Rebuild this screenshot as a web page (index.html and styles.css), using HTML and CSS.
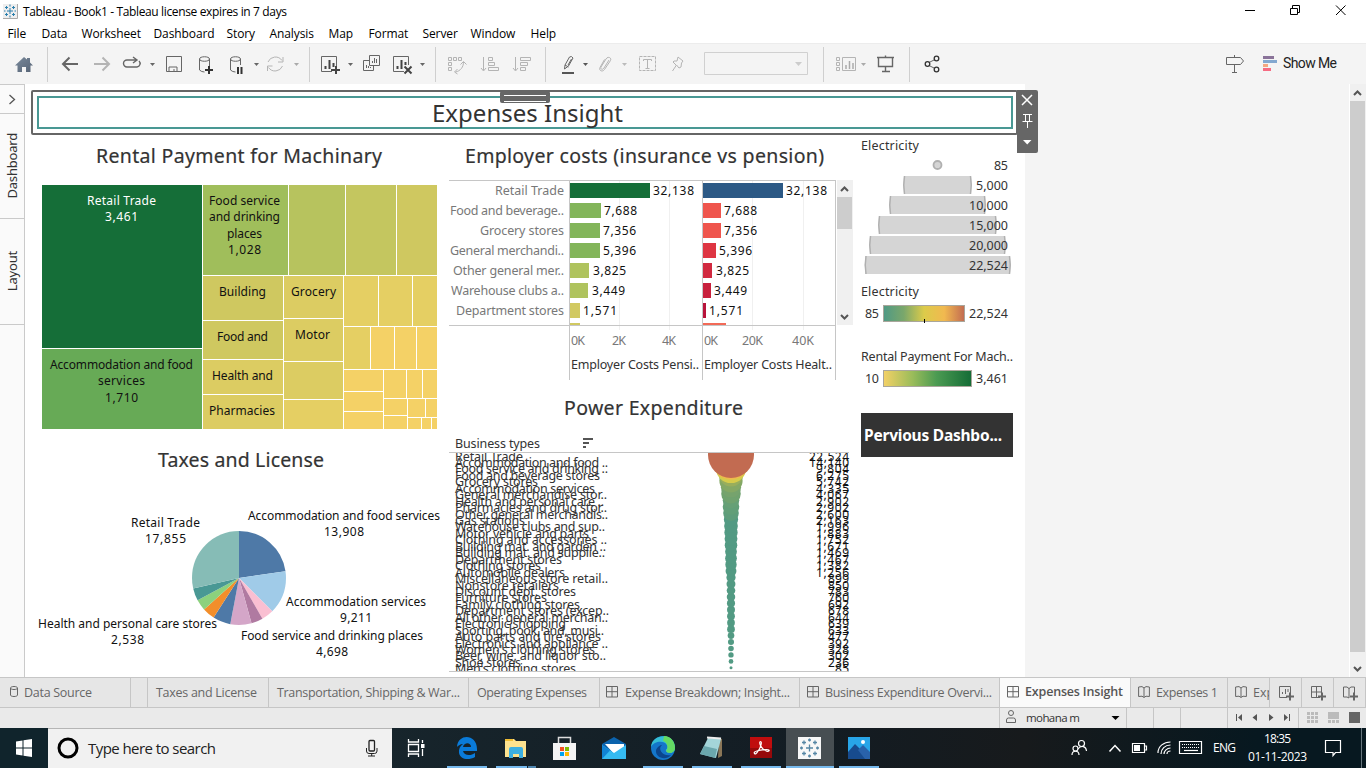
FILE: index.html
```html
<!DOCTYPE html>
<html lang="en">
<head>
<meta charset="utf-8">
<title>Tableau - Book1</title>
<link rel="stylesheet" href="styles.css">
</head>
<body>
<svg width="0" height="0" class="defs">
  <defs>
    <symbol id="dash" viewBox="0 0 12 12"><path d="M.5.5h11v10.5h-11zM6 .5V11M.5 5.7h11" fill="none" stroke="#666"/></symbol>
    <symbol id="book" viewBox="0 0 12 12"><path d="M.6 1 4 .6l2 1.4 2-1.4 3.400.4v9.500L8 10.200 6 11.500 4 10.200.6 10.500zM6 2v9" fill="none" stroke="#666"/></symbol>
    <symbol id="caret" viewBox="0 0 5 3"><path d="M0 0h5L2.500 3z"/></symbol>
  </defs>
</svg>
<div class="app">
  <header class="titlebar">
    <svg width="1366" height="22" viewBox="0 0 1366 22">
      <rect x="3" y="4" width="14" height="14" fill="#eee"/><path d="M17.500 4v14.500H3" fill="none" stroke="#aaa"/>
      <path d="M10 8v6M7 11h6M10 4.500v2M10 15.500v2M4 11h1.500M14.500 11h1.500M6.500 6v3M5 7.500h3M13.500 6v3M12 7.500h3M6.500 13v3M5 14.500h3M13.500 13v3M12 14.500h3" stroke="#2a7fad"/>
      <text class="ui" x="23" y="16" textLength="264">Tableau - Book1 - Tableau license expires in 7 days</text>
      <path d="M1245 10.500h10M1290.500 8.500h7v6h-7zM1292.500 8.500v-3h7v7h-2M1336 5.500l9.500 9.500M1345.500 5.500l-9.500 9.500" fill="none" stroke="#000"/>
    </svg>
  </header>
  <nav class="menubar">
    <span>File</span><span>Data</span><span>Worksheet</span><span>Dashboard</span><span>Story</span><span>Analysis</span><span>Map</span><span>Format</span><span>Server</span><span>Window</span><span>Help</span>
  </nav>
  <div class="toolbar">
    <svg class="group" width="48" height="41" viewBox="0 43 48 41">
      <linearGradient id="home" x2="1" y2="1"><stop stop-color="#7a8a9c"/><stop offset="1" stop-color="#566375"/></linearGradient>
      <path d="M15 65.500l9-8.500 3 2.500V58h3v4.500l3 3h-2.500v6.500h-4.500v-5h-4v5h-4.500v-6.500z" fill="url(#home)"/><path class="sep" d="M47.500 47v35"/>
    </svg>
    <svg class="group" width="262" height="41" viewBox="48 43 262 41">
      <path d="M78 64H63M69.500 57.500L63 64l6.500 6.500" class="dk w2"/><path d="M94 64h15M102.500 57.500L109 64l-6.500 6.500" class="lt w2"/>
      <path d="M136 60h-9a3.500 3.500 0 0 0 0 7h10a3.500 3.500 0 0 0 2-6M133 57l4 3-4 3" class="dk" stroke-width="1.400"/>
      <use href="#caret" x="150" y="63" width="5" height="3" fill="#666"/>
      <path d="M166.500 56.500h15v15h-15zM169 71v-4h8v4M174 69v2" class="dk"/>
      <path d="M199.500 59v11q2 2 5 2M209.500 59v7M199.500 59c0-3 10-3 10 0s-10 3-10 0" class="dk"/><path d="M205 70h8M209 66v8" stroke="#333" stroke-width="2"/>
      <path d="M230.500 59v11q2 2 5 2M240.500 59v6M230.500 59c0-3 10-3 10 0s-10 3-10 0" class="dk"/><path d="M237 67v7h2v-7zM240.500 67v7h2v-7z" fill="#333"/>
      <use href="#caret" x="254" y="63" width="5" height="3" fill="#666"/>
      <path d="M268 62a8 8 0 0 1 14-1.500M283 57v5h-5M282.500 66a8 8 0 0 1-14 1.500M267.500 71v-5h5" class="lt"/>
      <use href="#caret" x="294" y="63" width="5" height="3" fill="#aaa"/><path class="sep" d="M309.500 47v35"/>
    </svg>
    <svg class="group" width="126" height="41" viewBox="310 43 126 41">
      <path d="M332 71.500h-10.500v-15h15V66" class="dk"/><path d="M325.500 69v-3M329.500 69v-9M333.500 67v-4M331 70h9M336 66v8" stroke="#444" stroke-width="2" fill="none"/>
      <use href="#caret" x="348" y="63" width="5" height="3" fill="#666"/>
      <path d="M369.500 55.500h10v10h-10zM369 60.500h-5.500v10h10V66M372.500 63v-2M374.500 63v-5M376.500 63v-4M366.500 68v-3M368.500 68v-2M370.500 68v-1" class="dk"/>
      <path d="M404 71.500h-10.500v-15h15V65" class="dk"/><path d="M397.500 69v-3M401.500 69v-9M405.500 65v-3M404.500 66.500l7 7M411.500 66.500l-7 7" stroke="#444" stroke-width="2"/>
      <use href="#caret" x="420" y="63" width="5" height="3" fill="#666"/><path class="sep" d="M435.500 47v35"/>
    </svg>
    <svg class="group" width="110" height="41" viewBox="436 43 110 41">
      <path d="M448.500 57.500h3v3h-3zM453.500 57.500h3v3h-3zM458.500 57.500h3v3h-3zM448.500 62.500h3v3h-3zM448.500 67.500h3v3h-3zM463.500 62c0 5-3 9-8 10M460.500 64.500l3-3 3 3M457.500 69l-3 3 3 2" class="lt"/>
      <path d="M483.500 57v13M481 68l2.500 3 2.500-3M488.500 57.500h4v3h-4zM488.500 62.500h6v3h-6zM488.500 67.500h10v3h-10z" class="lt"/>
      <path d="M515.500 57v13M513 68l2.500 3 2.500-3M520.500 57.500h10v3h-10zM520.500 62.500h7v3h-7zM520.500 67.500h5v3h-5z" class="lt"/><path class="sep" d="M545.500 47v35"/>
    </svg>
    <svg class="group" width="278" height="41" viewBox="546 43 278 41">
      <path d="M564.500 69l.5-4 4.500-8q2-1.500 3.500 1l-4.500 8zM565 65l3.500 2M571.500 59l-3.500 6" class="dk"/><path d="M562 73h12" stroke="#555" stroke-width="2"/>
      <use href="#caret" x="583" y="63" width="5" height="3" fill="#555"/>
      <path d="M609 60l-5 8c-1.500 2.500-4 1-3-1l5-8c1.500-3 6-1.500 4.500 1.500l-6 9c-2 3-6 1-4.500-2l4.500-8" class="lt"/>
      <use href="#caret" x="622" y="63" width="5" height="3" fill="#bbb"/>
      <path d="M639.500 56.500h16v14h-16z" class="lt" stroke-dasharray="3 1"/><path d="M643.500 61v-1.500h8V61M647.500 59.500v9M645.500 68.500h4" class="lt"/>
      <path d="M678 57l5 4-1.500 2-.5 4-2 1-2.500-3-4 6M676 65l-3-3 1-1h3l1-4" class="lt"/>
      <path d="M704.500 52.500h103v22h-103z" fill="none" stroke="#d0d0d0"/><path d="M795 62h7l-3.500 4z" fill="#ccc"/><path class="sep" d="M823.500 47v35"/>
    </svg>
    <svg class="group" width="86" height="41" viewBox="824 43 86 41">
      <path d="M836.500 57.500h3v3h-3zM836.500 62.500h3v3h-3zM836.500 67.500h3v3h-3zM842.500 57.500h13v13h-13z" class="lt"/><path d="M846 69v-4M849.500 69v-8M853 69v-6" stroke="#aaa" stroke-width="1.500"/>
      <use href="#caret" x="861" y="63" width="5" height="3" fill="#aaa"/>
      <path d="M878.500 57.500h14v9h-14zM877 57.500h17M885.500 67v5M882 71.500h8M885.500 55.500v2" class="dk" stroke-width="1.400"/><path class="sep" d="M909.500 47v35"/>
    </svg>
    <svg class="group" width="296" height="41" viewBox="910 43 296 41">
      <path d="M928 63l8-4M928 65l8 4" class="dk"/><g fill="#f4f4f4" stroke="#333" stroke-width="1.300"><circle cx="927.500" cy="64" r="2.300"/><circle cx="936.500" cy="58.500" r="2.300"/><circle cx="936.500" cy="69.500" r="2.300"/></g>
    </svg>
    <svg class="group" width="160" height="41" viewBox="1206 43 160 41">
      <path d="M1226.500 57.500h14l3 3.500-3 3.500h-14zM1234.500 55v2M1234.500 65v7M1232 72.500h5" class="dk"/>
      <path d="M1263 56h11v3h-11z" fill="#8a7399"/><path d="M1263 60h14v3h-14z" fill="#83a8d0"/><path d="M1263 64h5v3h-5z" fill="#f3a781"/><path d="M1263 68h8v3h-8z" fill="#f66b82"/>
      <text class="show" x="1283" y="68" textLength="54">Show Me</text>
    </svg>
  </div>
  <main class="work">
    <aside class="rail">
      <div class="rail-toggle"><svg width="8" height="11" viewBox="0 0 8 11"><path d="M1.500 1l5 4.500-5 4.500" fill="none" stroke="#555" stroke-width="1.300"/></svg></div>
      <div class="rail-tab"><span>Dashboard</span></div>
      <div class="rail-tab"><span>Layout</span></div>
    </aside>
    <section class="canvas">
      <div class="zone">
        <div class="zone-title"><svg width="200" height="29" viewBox="428 98 200 29"><text x="432" y="122" class="t24" textLength="191">Expenses Insight</text></svg></div>
        <div class="handle"></div>
        <div class="zone-tools"><svg width="21" height="63" viewBox="1017 90 21 63"><path d="M1022 95l10 10M1032 95l-10 10" stroke="#fff" stroke-width="1.500"/><path d="M1023 114.500h9M1025.500 115v6M1029.500 115v6M1022.500 121.500h10M1027.500 122v6" fill="none" stroke="#fff"/><path d="M1023 140h8.500l-4.300 4.500z" fill="#fff"/></svg></div>
      </div>
      <div class="panels">
        <div class="col">
          <svg id="treemap" width="420" height="303" viewBox="25 135 420 303"><text class="t20" x="96" y="163" textLength="286">Rental Payment for Machinary</text></svg>
          <svg width="420" height="239" viewBox="25 438 420 239">
            <text class="t20" x="158" y="467" textLength="166">Taxes and License</text>
            <g id="pie" fill="none" stroke-width="47" transform="rotate(-90 239 578)"></g>
            <g class="mark">
              <text x="131" y="527" textLength="69">Retail Trade</text><text x="145" y="543" textLength="41">17,855</text>
              <text x="248" y="520" textLength="192">Accommodation and food services</text><text x="324" y="536" textLength="40">13,908</text>
              <text x="286" y="606" textLength="140">Accommodation services</text><text x="340" y="622" textLength="32">9,211</text>
              <text x="38" y="628" textLength="179">Health and personal care stores</text><text x="111" y="644" textLength="33">2,538</text>
              <text x="241" y="640" textLength="182">Food service and drinking places</text><text x="316" y="656" textLength="32">4,698</text>
            </g>
          </svg>
        </div>
        <div class="col">
          <svg id="bars" width="411" height="257" viewBox="445 135 411 257">
            <text class="t20" x="465" y="163" textLength="359">Employer costs (insurance vs pension)</text>
            <path d="M619.500 181v149M669.500 181v149M752.500 181v149M803.500 181v149" stroke="#f0f0f0"/>
            <g id="bar-rows"></g>
            <path d="M449 180.500h387M449 325.500h387M569.500 180v200M702.500 180v200M835.500 180v200" stroke="#c6c6c6"/>
            <g class="axis"><text x="571" y="345" textLength="14">0K</text><text x="612" y="345" textLength="14">2K</text><text x="662" y="345" textLength="14">4K</text><text x="704" y="345" textLength="14">0K</text><text x="742" y="345" textLength="21">20K</text><text x="792" y="345" textLength="22">40K</text></g>
            <g class="lab"><text x="571" y="369" textLength="128">Employer Costs Pensi..</text><text x="704" y="369" textLength="128">Employer Costs Healt..</text></g>
            <rect x="837" y="180" width="16" height="145" fill="#f0f0f0"/><rect x="837" y="197" width="15" height="32" fill="#cdcdcd"/>
            <path d="M841 191l3.500-3.500 3.500 3.500M841 315l3.500 3.500 3.500-3.500" fill="none" stroke="#555" stroke-width="2"/>
          </svg>
          <svg width="411" height="285" viewBox="445 392 411 285">
            <clipPath id="pane"><rect x="445" y="453" width="411" height="218"/></clipPath>
            <text class="t20" x="564" y="415" textLength="179">Power Expenditure</text>
            <text class="lab" x="455" y="448" textLength="85">Business types</text>
            <path d="M583 438h10v2h-10zM583 442h6v2h-6zM583 446h3v2h-3z" fill="#555"/>
            <path d="M449 452.500h400M449 671.500h400" stroke="#c6c6c6"/>
            <g id="power" clip-path="url(#pane)"></g>
          </svg>
        </div>
        <div class="col">
          <svg width="169" height="278" viewBox="856 135 169 278">
            <defs>
              <linearGradient id="g1"><stop stop-color="#4f9985"/><stop offset=".25" stop-color="#7aa76b"/><stop offset=".5" stop-color="#dccb4a"/><stop offset=".75" stop-color="#f1b950"/><stop offset="1" stop-color="#c26b51"/></linearGradient>
              <linearGradient id="g2"><stop stop-color="#f4d166"/><stop offset=".33" stop-color="#9abc5a"/><stop offset=".6" stop-color="#4c9b52"/><stop offset="1" stop-color="#146c36"/></linearGradient>
            </defs>
            <g id="sizes"></g>
            <circle cx="937.500" cy="165" r="4" fill="#d5d5d5" stroke="#b0b0b0" stroke-width="1.800"/>
            <g class="lab">
              <text x="861" y="150" textLength="58">Electricity</text><text x="994" y="170" textLength="14">85</text>
              <text x="976" y="190" textLength="32">5,000</text><text x="969" y="210" textLength="39">10,000</text><text x="969" y="230" textLength="39">15,000</text><text x="969" y="250" textLength="39">20,000</text><text x="969" y="270" textLength="39">22,524</text>
              <text x="861" y="296" textLength="58">Electricity</text><text x="865" y="318" textLength="14">85</text><text x="969" y="318" textLength="39">22,524</text>
              <text x="861" y="361" textLength="152">Rental Payment For Mach..</text><text x="865" y="383" textLength="14">10</text><text x="976" y="383" textLength="32">3,461</text>
            </g>
            <rect x="883.500" y="305.500" width="81" height="16" fill="url(#g1)" stroke="#a9a69b"/><path d="M924.500 319v4" stroke="#000"/>
            <rect x="883.500" y="370.500" width="88" height="16" fill="url(#g2)" stroke="#a9a69b"/>
          </svg>
          <button class="nav-btn"><svg width="152" height="44" viewBox="861 413 152 44"><text x="864" y="441" textLength="138">Pervious Dashbo...</text></svg></button>
        </div>
      </div>
    </section>
    <div class="void"></div>
    <div class="vscroll"><svg width="16" height="17" viewBox="0 0 16 17"><path d="M4 11l3.500-3.500L11 11" fill="none" stroke="#555" stroke-width="2"/></svg><div class="thumb"></div><svg width="16" height="25" viewBox="0 -8 16 25"><path d="M4 7l3.500 3.500L11 7" fill="none" stroke="#555" stroke-width="2"/></svg></div>
  </main>
  <div class="tabs">
    <div class="tab"><svg width="130" height="29" viewBox="0 678 130 29"><path d="M10.500 688c0-2 7-2 7 0v7c0 2-7 2-7 0zM10.500 688c0 2 7 2 7 0" fill="none" stroke="#666"/><text x="24" y="697" textLength="68">Data Source</text></svg></div>
    <div class="tab"></div>
    <div class="tab"><svg width="120" height="29" viewBox="148 678 120 29"><text x="156" y="697" textLength="101">Taxes and License</text></svg></div>
    <div class="tab"><svg width="199" height="29" viewBox="269 678 199 29"><text x="277" y="697" textLength="183">Transportation, Shipping &amp; War...</text></svg></div>
    <div class="tab"><svg width="130" height="29" viewBox="469 678 130 29"><text x="477" y="697" textLength="110">Operating Expenses</text></svg></div>
    <div class="tab"><svg width="199" height="29" viewBox="600 678 199 29"><use href="#dash" x="606" y="686" width="12" height="12"/><text x="625" y="697" textLength="165">Expense Breakdown; Insight...</text></svg></div>
    <div class="tab"><svg width="199" height="29" viewBox="800 678 199 29"><use href="#dash" x="807" y="686" width="12" height="12"/><text x="825" y="697" textLength="167">Business Expenditure Overvi...</text></svg></div>
    <div class="tab active"><svg width="130" height="29" viewBox="1000 678 130 29"><use href="#dash" x="1007" y="686" width="12" height="12"/><text x="1025" y="696" textLength="98">Expenses Insight</text></svg></div>
    <div class="tab"><svg width="96" height="29" viewBox="1131 678 96 29"><use href="#book" x="1138" y="686" width="12" height="12"/><text x="1156" y="697" textLength="62">Expenses 1</text></svg></div>
    <div class="tab"><svg width="41" height="29" viewBox="1228 678 41 29"><use href="#book" x="1235" y="686" width="12" height="12"/><text x="1253" y="697">Exp</text></svg></div>
    <div class="tab"><svg width="31" height="29" viewBox="1270 678 31 29"><path d="M1287 697.500h-7.500v-11h11v7M1282.500 694v-2M1285.500 694v-5M1288 692v-3" fill="none" stroke="#666"/><path d="M1286 696.500h8M1290 692.500v8" stroke="#666" stroke-width="2"/></svg></div>
    <div class="tab"><svg width="31" height="29" viewBox="1302 678 31 29"><path d="M1320 697.500h-8.500v-11h10v7M1316.500 687v10M1312 692h9" fill="none" stroke="#666"/><path d="M1318 696.500h8M1322 692.500v8" stroke="#666" stroke-width="2"/></svg></div>
    <div class="tab"><svg width="31" height="29" viewBox="1334 678 31 29"><path d="M1349 698l-2-1h-3.500v-10h3.500l2 1.500 2-1.500h3.500v6M1349 688v10" fill="none" stroke="#666"/><path d="M1350 696.500h8M1354 692.500v8" stroke="#666" stroke-width="2"/></svg></div>
  </div>
  <div class="status">
    <div></div>
    <div><svg width="126" height="20" viewBox="1000 708 126 20"><circle cx="1011" cy="713" r="2.500" fill="none" stroke="#666"/><path d="M1006.500 722.500v-2.500q0-2 2-2h5q2 0 2 2v2.500z" fill="none" stroke="#666"/><text x="1026" y="722" textLength="54">mohana m</text><path d="M1111.500 716h8l-4 4z"/></svg></div>
    <div></div><div></div><div></div>
    <div><svg width="70" height="20" viewBox="1228 708 70 20"><path d="M1236 714v7h1v-7zM1242 714v7l-4-3.500zM1257 714v7l-4.500-3.500zM1269 714v7l4.500-3.500zM1284 714v7l4-3.500zM1289 714v7h1v-7z" fill="#555"/></svg></div>
    <div><svg width="67" height="20" viewBox="1299 708 67 20"><path d="M1307 712h3v3h-3zM1311 712h3v3h-3zM1315 712h3v3h-3zM1307 716h3v3h-3zM1311 716h3v3h-3zM1315 716h3v3h-3zM1307 720h3v3h-3zM1311 720h3v3h-3zM1315 720h3v3h-3zM1328 712h11v7h-11zM1328 720h3v3h-3zM1332 720h3v3h-3zM1336 720h3v3h-3z" fill="#bbb"/><path d="M1349 712h11v11h-11z" fill="#666"/></svg></div>
  </div>
  <footer class="taskbar">
    <div class="start"><svg width="48" height="40" viewBox="0 728 48 40"><path d="M16 741.500l6.500-1v7H16zM23.500 740.300l8.500-1.300v8.500h-8.500zM16 748.500h6.500v7l-6.500-1zM23.500 748.500H32v8.500l-8.500-1.300z" fill="#fff"/></svg></div>
    <div class="search"><svg width="344" height="39" viewBox="48 729 344 39"><circle cx="68" cy="748" r="9" fill="none" stroke="#000" stroke-width="3"/><text x="88" y="754" textLength="128">Type here to search</text><rect x="369" y="740.500" width="5.500" height="10.500" rx="1" fill="none" stroke="#222" stroke-width="1.300"/><path d="M366.500 748v3q0 2.500 2.500 2.500h5.500q2.500 0 2.500-2.500v-3M371.700 753v3M368 756h7" fill="none" stroke="#222"/></svg></div>
    <svg class="apps" width="648" height="40" viewBox="392 728 648 40">
      <rect x="786" y="728" width="48" height="40" fill="#474e52"/>
      <g fill="none" stroke="#fff" stroke-width="1.300"><path d="M408.500 744.500h10v7h-10zM408.500 739v3h10v-3M408.500 757v-3h10v3M422.500 740v3M422.500 749v7"/></g><rect x="421" y="744" width="3.500" height="4" fill="#fff"/>
      <path d="M457 747c1-14 20-13 20 2v2h-14c1 5 8 5 12 2v4c-7 4-15 2-16-4-.5-4 1-7 4-9-3 0-5 2-6 3zm6 0h8c0-5-7-5-8 0z" fill="#0a7bd9"/>
      <path d="M505 739h9l2 2h10v16h-21z" fill="#fde28e"/><path d="M505 739h8v2h-8z" fill="#f0bd34"/><path d="M509 758v-9q0-2 2-2h10q2 0 2 2v9h-4v-4h-6v4z" fill="#3cafe1"/>
      <path d="M558.500 744v-6.500h12v6.500" fill="none" stroke="#ddd" stroke-width="1.500"/><path d="M553 743h23v17h-23z" fill="#f4f4f4"/><path d="M560 747h4v4h-4z" fill="#f25022"/><path d="M565 747h4v4h-4z" fill="#7fba00"/><path d="M560 752h4v4h-4z" fill="#00a4ef"/><path d="M565 752h4v4h-4z" fill="#ffb900"/>
      <path d="M602 744l12-7 12 7v15h-24z" fill="#0c63ad"/><path d="M605 744h19v9l-9 2z" fill="#fff"/><path d="M602 745l12 8 12-8v14h-24z" fill="#35baf1"/><path d="M602 745l8 5.500-8 8.500z" fill="#1183d4"/>
      <circle cx="663" cy="748" r="12" fill="#1476c9"/><path d="M651 747c1-14 24-15 24 1 0 6-8 6-9 3-1-2 3-2 1-6-3-5-13-4-16 2z" fill="#35bed4"/><path d="M664 736c8 0 11 7 11 12 0 6-8 6-9 3 3-3 1-9-3-10z" fill="#64da63"/><path d="M662 745c-5 4 1 12 9 10-5 6-16 3-15-5 1-3 4-5 6-5z" fill="#0b458c"/>
      <path d="M719 738l3 1 0 17-4 2z" fill="#8a7657"/><path d="M708 738l13 1-5 19-16-4z" fill="#a4d5d9"/><path d="M704 746l13 3-2 9-15-4z" fill="#6ba7ad"/><path d="M707 737.500l14 1" stroke="#eee" stroke-width="2"/>
      <rect x="750" y="737" width="22" height="21" fill="#c00d0e"/><path d="M750 748h22v10h-22z" fill="#96090b"/><path d="M754.500 753.500c-2-2 6-4 12-4 5 0 2 3-1 1-5-2-7-9-5-9s0 6-2 9-3 4-4 3z" fill="none" stroke="#fff" stroke-width="1.200"/>
      <rect x="798" y="737" width="23" height="22" fill="#f7f7f7"/><path d="M809.500 744.500v7M806 748h7M809.500 738.500v3M808 740h3M809.500 754.500v3M808 756h3M800 748h3M801.500 746.500v3M816 748h3M817.500 746.500v3M804 740.500v4M802 742.500h4M815 740.500v4M813 742.500h4M804 751.500v4M802 753.500h4M815 751.500v4M813 753.500h4" stroke="#5586a4" stroke-width="1.300"/>
      <rect x="848" y="737" width="22" height="22" fill="#28a5e8"/><path d="M848 752l7-8 15 15h-22z" fill="#174b8e"/><path d="M858 750l5-5 7 7v7h-5z" fill="#2962aa"/><circle cx="863" cy="742" r="2" fill="#fff"/>
      <path d="M447 766h40v2h-40zM496 766h31v2h-31zM643 766h40v2h-40zM692 766h40v2h-40zM741 766h40v2h-40zM786 766h48v2h-48zM839 766h40v2h-40z" fill="#76b9ed"/><path d="M528 766h8v2h-8z" fill="#4f86b0"/>
    </svg>
    <svg class="tray" width="326" height="40" viewBox="1040 728 326 40">
      <g fill="none" stroke="#fff" stroke-width="1.200"><circle cx="1081.500" cy="743.500" r="3"/><circle cx="1075.500" cy="748.500" r="2.500"/><path d="M1072 755c0-5 7-5 7 0M1078 749c3-4 8-3 8.500 2"/><path d="M1109.500 751.500l5.500-6 5.500 6" stroke-width="1.500"/><path d="M1132.500 743.500h12v9h-12zM1145 746h1.500v4h-1.500"/><path d="M1158 753c0-7 6-11 12.500-11M1161 754c0-5 4-9 9.500-9M1164 754c0-3 3-6 6.500-6M1167 754c0-2 1-3 3.500-3"/><path d="M1179.500 741.500h22v12h-22z"/><path d="M1182 744.500h18M1182 747.500h18" stroke-dasharray="1 1"/><path d="M1184 750.500h14"/><path d="M1325.500 740.500h15v12h-5l-2.500 3v-3h-7.500z"/></g>
      <rect x="1134" y="745" width="6" height="6" fill="#fff"/>
      <text x="1213" y="752" textLength="23">ENG</text><text x="1264" y="743" textLength="27">18:35</text><text x="1248" y="761" textLength="59">01-11-2023</text><path d="M1361.500 728v40" stroke="#66757c"/>
    </svg>
  </footer>
</div>
<script src="charts.js"></script>
</body>
</html>
```
FILE: styles.css
```css
* { box-sizing: border-box; }
body { margin: 0; font-family: "Noto Sans", "Open Sans", sans-serif; background: #f4f4f4; }
svg { display: block; flex: none; }
.defs { display: none; }
.app { width: 1366px; height: 768px; display: flex; flex-direction: column; overflow: hidden; }
.titlebar { height: 22px; background: #fff; }
.ui { font: 12px "Open Sans", sans-serif; fill: #000; }
.menubar { height: 21px; background: #fff; display: grid; grid-template-columns: 34px 40px 72px 73px 43px 59px 40px 54px 48px 60px 60px; padding-left: 7.500px; font: 12px/24px "Open Sans", sans-serif; letter-spacing: -.1px; color: #000; }
.toolbar { height: 41px; display: flex; background: #f4f4f4; border-top: 1px solid #ececec; }
.group { margin-top: -1px; }
.dk { fill: none; stroke: #666; }
.lt { fill: none; stroke: #b4b4b4; }
.w2 { stroke-width: 2; }
.sep { fill: none; stroke: #cfcfcf; }
.show { font: 14px Roboto, sans-serif; fill: #222; }

.work { height: 593px; display: flex; }
.rail { width: 25px; background: #fafafa; border-right: 1px solid #cacaca; border-top: 1px solid #cacaca; }
.rail-toggle { height: 29px; border-bottom: 1px solid #cacaca; display: flex; align-items: center; justify-content: center; }
.rail-tab { height: 105px; border-bottom: 1px solid #cacaca; display: flex; align-items: center; justify-content: center; }
.rail-tab + .rail-tab { height: 106px; }
.rail-tab span { writing-mode: vertical-rl; transform: rotate(180deg); font-size: 13px; line-height: 20px; letter-spacing: -.2px; color: #333; }
.canvas { width: 1000px; background: #fff; display: flex; flex-direction: column; }
.zone { position: relative; width: 987px; height: 45px; margin: 6px 0 0 6px; border: 2px solid #666; border-radius: 2px; padding: 4px 3px 4px 4px; flex: none; }
.zone-title { height: 33px; border: 2px solid #499894; display: flex; justify-content: center; align-items: center; padding-left: 6px; }
.zone-title svg { overflow: visible; }
.handle { position: absolute; left: 467px; top: -1px; width: 50px; height: 12px; background: #666; border-radius: 2px; border-top: 4px solid #666; }
.handle::before { content: ""; display: block; height: 5px; margin: 0 4px; border-top: 1px solid #fff; border-bottom: 1px solid #fff; }
.zone-tools { position: absolute; left: 984px; top: -2px; width: 21px; height: 63px; background: #666; border-radius: 0 2px 2px 0; z-index: 2; }
.panels { display: grid; grid-template-columns: 420px 411px 169px; height: 542px; }
.col { display: flex; flex-direction: column; }
.t24 { font-size: 24px; fill: #333; }
.t20 { font-size: 19.500px; fill: #333; stroke: #333; stroke-width: .2px; }
.mark { font-size: 12px; fill: #111; }
.lab { font-size: 12.500px; fill: #333; }
.axis, .row-head { font-size: 12.500px; fill: #787878; }
.nav-btn { width: 152px; height: 44px; margin: 0 0 0 5px; padding: 0; border: 0; background: #333; }
.nav-btn text { font: bold 15.500px "Noto Sans", sans-serif; fill: #fff; }
.void { width: 324px; background: #f4f4f4; }
.vscroll { width: 17px; border-left: 1px solid #fff; background: #f0f0f0; display: flex; flex-direction: column; }
.thumb { width: 15px; flex: 1; background: #cdcdcd; }

.tabs { height: 31px; border-top: 1px solid #c6c6c6; border-bottom: 1px solid #c6c6c6; display: grid; grid-template-columns: 131px 17px 121px 200px 131px 200px 200px 131px 97px 42px 32px 32px 32px; background: #e6e6e6; }
.tab { border-right: 1px solid #c6c6c6; overflow: hidden; }
.tab text { font: 12.500px "Open Sans", sans-serif; fill: #666; }
.tab.active { background: #fafafa; }
.tab.active text { font-weight: 600; fill: #555; }
.status { height: 20px; display: grid; grid-template-columns: 1000px 127px 27px 27px 47px 71px 67px; background: #eaeaea; }
.status > div { border-right: 1px solid #c6c6c6; }
.status > div:last-child { border-right: 0; }
.status text { font: 11.500px "Open Sans", sans-serif; fill: #333; }
.taskbar { height: 40px; display: flex; background: linear-gradient(90deg, #17252c 28%, #131c23 60%, #171a1c 75%, #071820 92%); }
.start { width: 48px; background: #10242c; }
.search { width: 344px; background: #f1f1f1; border-top: 1px solid #b5b5b5; }
.search text { font: 15px "Open Sans", sans-serif; fill: #222; }
.tray text { font: 12px "Open Sans", sans-serif; fill: #fff; }
```
FILE: charts.js
```js
const NS = "http://www.w3.org/2000/svg";

function add(parent, name, attrs, text) {
  const el = document.createElementNS(NS, name);
  for (const key in attrs) el.setAttribute(key, attrs[key]);
  if (text) el.textContent = text;
  parent.appendChild(el);
  return el;
}

function label(parent, x1, x2, y, text, cls) {
  add(parent, "text", { x: x1, y, textLength: x2 - x1, class: cls }, text);
}

// Treemap: left, top, right, bottom, colour
const A = "#cfc860", B = "#dccc62", C = "#e5cf63", D = "#f4d166";
const tree = document.getElementById("treemap");
[
  [42, 185, 202, 348, "#156e38"], [42, 349, 202, 429, "#67aa56"],
  [203, 185, 288, 275, "#a0be5b"], [289, 185, 345, 275, "#b7c35e"], [346, 185, 396, 275, "#c4c65f"], [397, 185, 437, 275, A],
  [203, 276, 283, 320, A], [203, 321, 283, 359, A], [203, 360, 283, 394, B], [203, 395, 283, 429, B],
  [284, 276, 343, 318, B], [284, 319, 343, 361, B], [284, 362, 343, 399, B], [284, 400, 343, 429, C],
  [344, 276, 378, 326, C], [379, 276, 412, 326, C], [413, 276, 437, 326, C],
  [344, 327, 370, 369, C], [371, 327, 394, 369, D], [395, 327, 416, 369, D], [417, 327, 437, 369, D],
  [344, 370, 383, 391, D], [344, 392, 383, 411, D], [344, 412, 383, 429, D],
  [384, 370, 406, 398, D], [407, 370, 422, 398, D], [423, 370, 437, 398, D],
  [384, 399, 407, 415, D], [384, 416, 407, 429, D], [408, 399, 425, 417, D], [426, 399, 437, 417, D],
  [408, 418, 421, 429, D], [422, 418, 431, 429, D], [432, 418, 437, 429, D]
].forEach(([l, t, r, b, fill]) => add(tree, "rect", { x: l, y: t, width: r - l, height: b - t, fill }));
[
  [50, 193, 369, "Accommodation and food"], [98, 145, 385, "services"], [105, 138, 402, "1,710"],
  [209, 280, 205, "Food service"], [209, 280, 221, "and drinking"], [227, 262, 238, "places"], [228, 261, 254, "1,028"],
  [219, 266, 296, "Building"], [217, 268, 341, "Food and"], [212, 273, 380, "Health and"], [209, 275, 415, "Pharmacies"],
  [291, 336, 296, "Grocery"], [295, 330, 339, "Motor"]
].forEach(([a, b, y, s]) => label(tree, a, b, y, s, "mark"));
label(tree, 87, 156, 205, "Retail Trade", "mark light");
label(tree, 105, 138, 221, "3,461", "mark light");
tree.querySelectorAll(".light").forEach(t => { t.style.fill = "#fff"; });

// Pie slices: start angle, end angle, colour
const pie = document.getElementById("pie");
[
  [0, 81.3, "#4e79a7"], [81.3, 135, "#a0cbe8"], [135, 150, "#fabfd2"], [150, 164.3, "#b07aa1"], [164.3, 191, "#d4a6c8"],
  [191, 212.8, "#4e79a7"], [212.8, 228, "#f28e2b"], [228, 241.6, "#8cd17d"], [241.6, 256.8, "#499894"], [256.8, 360, "#86bcb6"]
].forEach(([a, b, stroke]) => add(pie, "circle", { cx: 239, cy: 578, r: 23.5, pathLength: 360, stroke, "stroke-dasharray": `${b - a} 360`, "stroke-dashoffset": -a }));

// Employer cost bars
const bars = document.getElementById("bar-rows");
[
  ["Retail Trade", 495, "32,138", 80, "#156e38", 80, "#2c5985", 653, 786, 41],
  ["Food and beverage..", 450, "7,688", 31, "#83b55a", 18, "#ef554d", 604, 724, 33],
  ["Grocery stores", 480, "7,356", 30, "#83b55a", 18, "#ef554d", 603, 724, 33],
  ["General merchandi..", 450, "5,396", 30, "#83b55a", 13, "#de3542", 603, 719, 33],
  ["Other general mer..", 453, "3,825", 19, "#afc35e", 9, "#d1293f", 593, 716, 33],
  ["Warehouse clubs a..", 451, "3,449", 18, "#afc35e", 8, "#c8203c", 592, 714, 33],
  ["Department stores", 456, "1,571", 10, "#d1c961", 3, "#b8133a", 583, 709, 34]
].forEach(([name, x, value, w1, c1, w2, c2, v1, v2, len], i) => {
  const y = 183 + 20 * i;
  label(bars, x, 564, y + 12, name, "row-head");
  add(bars, "rect", { x: 570, y, width: w1, height: 15, fill: c1 });
  add(bars, "rect", { x: 703, y, width: w2, height: 15, fill: c2 });
  label(bars, v1, v1 + len, y + 12, value, "mark");
  label(bars, v2, v2 + len, y + 12, value, "mark");
});
add(bars, "rect", { x: 570, y: 323, width: 10, height: 2, fill: "#d1c961" });
add(bars, "rect", { x: 703, y: 323, width: 23, height: 2, fill: "#f26a57" });

// Power expenditure rows
const power = document.getElementById("power");
const rows = [
  ["Retail Trade", 523, "22,524"], ["Accommodation and food ..", 608, "14,140"], ["Food service and drinking ..", 608, "9,804"],
  ["Food and beverage stores", 600, "6,275"], ["Grocery stores", 538, "5,742"], ["Accommodation services", 595, "4,335"],
  ["General merchandise stor..", 607, "4,067"], ["Health and personal care ..", 604, "2,902"], ["Pharmacies and drug stor..", 607, "2,902"],
  ["Other general merchandis..", 608, "2,600"], ["Gas stations", 525, "2,163"], ["Warehouse clubs and sup..", 605, "1,996"],
  ["Motor vehicle and parts", 589, "1,883"], ["Clothing and accessories ..", 607, "1,752"], ["Building mat. and garden ..", 606, "1,671"],
  ["Building mat. and supplie..", 605, "1,469"], ["Department stores", 562, "1,467"], ["Clothing stores", 541, "1,382"],
  ["Automobile dealers", 565, "1,256"], ["Miscellaneous store retail..", 608, "899"], ["Nonstore retailers", 559, "850"],
  ["Discount dept. stores", 576, "783"], ["Furniture stores", 547, "760"], ["Family clothing stores", 580, "692"],
  ["Department stores (excep..", 609, "678"], ["All other general merchan..", 608, "644"], ["Electronic shopping", 566, "639"],
  ["Sporting, book, and, musi..", 604, "633"], ["Auto parts and tire stores", 601, "477"], ["Electronics and appliance ..", 608, "392"],
  ["Women's clothing stores", 595, "328"], ["Beer, wine, and liquor sto..", 606, "302"], ["Shoe stores", 521, "236"], ["Men's clothing stores", 576, "85"]
];
const tones = ["#c26b51", "#efb94d", "#d5cb4b", "#98ae5c", "#84a865", "#76a36d", "#70a26f", "#66a076", "#629f78", "#5e9d7b"];
for (let i = rows.length - 1; i >= 0; i--) {
  const amount = Number(rows[i][2].replace(",", ""));
  add(power, "circle", { cx: 731, cy: 455 + i * 6.45, r: Math.max(1.5, 23 * Math.sqrt(amount / 22524)), fill: tones[i] || "#529a83" });
}
rows.forEach(([name, end, value], i) => {
  const y = Math.round(460.5 + i * 6.45);
  const width = [0, 0, 14, 21, 0, 33, 40][value.length];
  label(power, 455, end, y, name, "lab");
  label(power, 849 - width, 849, y, value, "mark");
});

// Size legend
const sizes = document.getElementById("sizes");
[[903, 972], [889, 986], [878, 997], [869, 1006], [864.5, 1011]].forEach(([a, b], i) => {
  const y = 176 + 20 * i;
  add(sizes, "path", { d: `M${a + 1} ${y}H${b - 1}q1.5 9 0 18H${a + 1}q-1.5 -9 0 -18`, fill: "#d5d5d5" });
  add(sizes, "path", { d: `M${a + 1.5} ${y}q-1.5 9 0 18M${b - 1.5} ${y}q1.5 9 0 18`, fill: "none", stroke: "#b0b0b0", "stroke-width": 1.5 });
});
```
